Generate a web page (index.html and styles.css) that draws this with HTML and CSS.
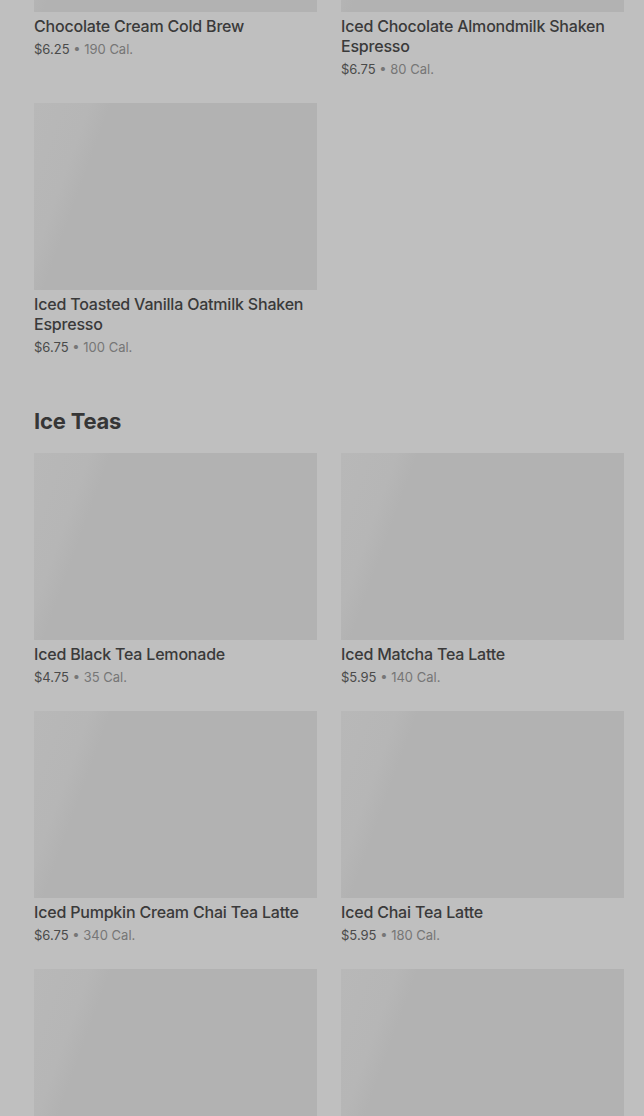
FILE: index.html
```html
<!DOCTYPE html>
<html lang="en">
<head>
    <meta charset="UTF-8">
    <meta name="viewport" content="width=device-width, initial-scale=1.0">
    <title>Menu</title>
    <link rel="stylesheet" href="styles.css">
</head>
<body>
    <div class="menu">
        <section class="category">
            <div class="item-grid">
                <div class="item">
                    <div class="item-img"></div>
                    <div class="item-name">Chocolate Cream Cold Brew</div>
                    <div class="item-meta"><span class="price">$6.25</span> • 190 Cal.</div>
                </div>
                <div class="item">
                    <div class="item-img"></div>
                    <div class="item-name">Iced Chocolate Almondmilk Shaken Espresso</div>
                    <div class="item-meta"><span class="price">$6.75</span> • 80 Cal.</div>
                </div>
                <div class="item">
                    <div class="item-img"></div>
                    <div class="item-name">Iced Toasted Vanilla Oatmilk Shaken Espresso</div>
                    <div class="item-meta"><span class="price">$6.75</span> • 100 Cal.</div>
                </div>
            </div>
        </section>

        <section class="category">
            <h2>Ice Teas</h2>
            <div class="item-grid">
                <div class="item">
                    <div class="item-img"></div>
                    <div class="item-name">Iced Black Tea Lemonade</div>
                    <div class="item-meta"><span class="price">$4.75</span> • 35 Cal.</div>
                </div>
                <div class="item">
                    <div class="item-img"></div>
                    <div class="item-name">Iced Matcha Tea Latte</div>
                    <div class="item-meta"><span class="price">$5.95</span> • 140 Cal.</div>
                </div>
                <div class="item">
                    <div class="item-img"></div>
                    <div class="item-name">Iced Pumpkin Cream Chai Tea Latte</div>
                    <div class="item-meta"><span class="price">$6.75</span> • 340 Cal.</div>
                </div>
                <div class="item">
                    <div class="item-img"></div>
                    <div class="item-name">Iced Chai Tea Latte</div>
                    <div class="item-meta"><span class="price">$5.95</span> • 180 Cal.</div>
                </div>
                <!-- still loading -->
                <div class="item">
                    <div class="item-img"></div>
                </div>
                <div class="item">
                    <div class="item-img"></div>
                </div>
            </div>
        </section>
    </div>
</body>
</html>
```

FILE: styles.css
```css
body {
    margin: 0;
    background: #bfbfbf;
    font-family: Inter, "Noto Sans", sans-serif;
    overflow: hidden;
}

/* page is scrolled: first row images are cut off at the top */
.menu {
    margin-top: -175px;
    padding: 0 20px 0 34px;
}

.category h2 {
    margin: 48px 0 16px;
    font-size: 22px;
    line-height: 32px;
    font-weight: 700;
    color: #363636;
    letter-spacing: -0.2px;
}

.item-grid {
    display: grid;
    grid-template-columns: 283px 283px;
    column-gap: 24px;
    row-gap: 24px;
}

.item-img {
    height: 187px;
    background: linear-gradient(110deg, #b8b8b8 0%, #b6b6b6 16%, #b2b2b2 22%, #b2b2b2 100%);
}

.item-name {
    margin-top: 4px;
    font-size: 16px;
    line-height: 20px;
    font-weight: 500;
    color: #3a3a3a;
    letter-spacing: -0.2px;
}

.item-meta {
    margin-top: 3px;
    font-size: 13px;
    line-height: 20px;
    color: #767676;
}

.price {
    color: #4a4a4a;
}
```
